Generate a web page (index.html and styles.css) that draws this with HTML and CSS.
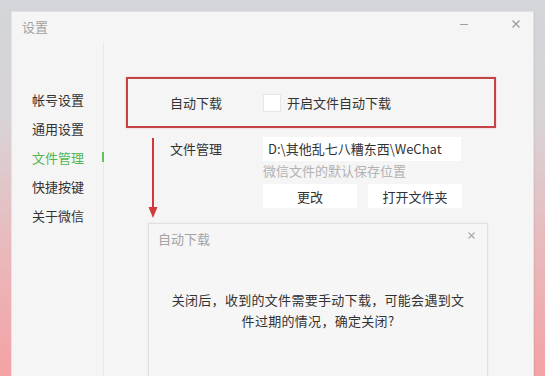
FILE: index.html
```html
<!DOCTYPE html>
<html lang="zh-CN">
<head>
<meta charset="utf-8">
<title>设置</title>
<link rel="stylesheet" href="styles.css">
</head>
<body>
<div class="window">
  <div class="titlebar">
    <span class="title">设置</span>
    <div class="controls">
      <span class="ctrl-min"></span>
      <svg class="ctrl-close" width="8" height="8" viewBox="0 0 8 8"><path d="M0.5 0.5L7.5 7.5M7.5 0.5L0.5 7.5" stroke="#9a9a9a" stroke-width="1.2"/></svg>
    </div>
  </div>
  <div class="content">
    <nav class="sidebar">
      <div class="nav-item">帐号设置</div>
      <div class="nav-item">通用设置</div>
      <div class="nav-item active">文件管理</div>
      <div class="nav-item">快捷按键</div>
      <div class="nav-item">关于微信</div>
    </nav>
    <main class="main">
      <div class="row highlight">
        <div class="label">自动下载</div>
        <label class="check"><span class="box"></span>开启文件自动下载</label>
      </div>
      <div class="row file-row">
        <div class="label">文件管理</div>
        <div class="file-col">
          <div class="path">D:\其他乱七八糟东西\WeChat</div>
          <div class="hint">微信文件的默认保存位置</div>
          <div class="buttons">
            <button class="btn">更改</button>
            <button class="btn">打开文件夹</button>
          </div>
        </div>
      </div>
    </main>
  </div>
  <svg class="arrow" width="14" height="82" viewBox="0 0 14 82">
    <path d="M7 0V72" stroke="#d2393b" stroke-width="2"/>
    <path d="M2.5 69L7 80L11.5 69Z" fill="#d2393b"/>
  </svg>
  <div class="dialog">
    <div class="dialog-title">自动下载
      <svg class="dialog-close" width="7" height="7" viewBox="0 0 7 7"><path d="M0.5 0.5L6.5 6.5M6.5 0.5L0.5 6.5" stroke="#a8a8a8" stroke-width="1.1"/></svg>
    </div>
    <p class="dialog-msg">关闭后，收到的文件需要手动下载，可能会遇到文<br>件过期的情况，确定关闭?</p>
  </div>
</div>
</body>
</html>
```
FILE: styles.css
```css
html, body {
  margin: 0;
  padding: 0;
}
body {
  width: 545px;
  height: 376px;
  overflow: hidden;
  background: linear-gradient(180deg, #d3d6da 0px, #d8d3d6 120px, #eab7ba 260px, #f4a2a5 376px);
  font-family: "Noto Sans CJK SC", "Noto Sans", sans-serif;
  padding: 12px 12px 0 12px;
  box-sizing: border-box;
}
.window {
  position: relative;
  width: 521px;
  height: 364px;
  background: #f5f5f5;
  box-shadow: 0 0 0 1px #e3e3e3, 1px 0 2px rgba(0,0,0,0.12);
}
.titlebar {
  height: 30px;
  display: flex;
  align-items: center;
  justify-content: space-between;
  padding: 0 13px 0 10px;
}
.title {
  font-size: 13px;
  color: #a3a3a3;
  line-height: 30px;
}
.controls {
  display: flex;
  align-items: center;
  gap: 44px;
  margin-top: -6px;
}
.ctrl-min {
  width: 8px;
  height: 1px;
  background: #a0a0a0;
}
.content {
  display: flex;
  height: 334px;
}
.sidebar {
  width: 92px;
  border-right: 1px solid #e9e9e9;
  padding-top: 43px;
  box-sizing: border-box;
  position: relative;
}
.nav-item {
  height: 29px;
  line-height: 29px;
  padding-left: 20px;
  font-size: 13px;
  color: #333;
  position: relative;
}
.nav-item.active {
  color: #52b752;
}
.nav-item.active::after {
  content: "";
  position: absolute;
  right: -1px;
  top: 9px;
  width: 2px;
  height: 10px;
  background: #62c062;
}
.main {
  flex: 1;
  padding: 35px 0 0 22px;
}
.row {
  display: flex;
  align-items: flex-start;
}
.label {
  width: 93px;
  font-size: 13px;
  color: #333;
  flex: none;
}
.highlight {
  width: 370px;
  height: 51px;
  box-sizing: border-box;
  border: 2px solid #c34447;
  box-shadow: 0 0 2px rgba(220,80,80,0.35);
  align-items: center;
  padding-left: 42px;
}
.check {
  display: flex;
  align-items: center;
  font-size: 13px;
  color: #333;
  gap: 6px;
}
.box {
  width: 16px;
  height: 16px;
  background: #fff;
  border: 1px solid #e6e6e6;
}
.file-row {
  margin: 9px 0 0 44px;
}
.file-row .label {
  line-height: 24px;
}
.path {
  width: 198px;
  height: 24px;
  line-height: 24px;
  background: #fff;
  padding-left: 5px;
  box-sizing: border-box;
  font-size: 13px;
  color: #333;
  white-space: nowrap;
}
.hint {
  font-size: 13px;
  color: #b2b2b2;
  line-height: 20px;
}
.buttons {
  display: flex;
  gap: 11px;
  margin-top: 3px;
}
.btn {
  width: 94px;
  height: 24px;
  border: none;
  background: #fff;
  font-family: inherit;
  font-size: 13px;
  color: #333;
  padding: 0;
}
.arrow {
  position: absolute;
  left: 134px;
  top: 126px;
}
.dialog {
  position: absolute;
  left: 136px;
  top: 211px;
  width: 340px;
  height: 170px;
  background: #f6f6f6;
  border: 1px solid #e0e0e0;
  box-sizing: border-box;
  box-shadow: 0 0 3px rgba(0,0,0,0.06);
}
.dialog-title {
  position: relative;
  height: 30px;
  line-height: 30px;
  padding-left: 9px;
  font-size: 13px;
  color: #a3a3a3;
}
.dialog-close {
  position: absolute;
  right: 12px;
  top: 8px;
}
.dialog-msg {
  margin: 35px 0 0 0;
  text-align: center;
  font-size: 13px;
  letter-spacing: 0.3px;
  line-height: 21px;
  color: #333;
}
```
